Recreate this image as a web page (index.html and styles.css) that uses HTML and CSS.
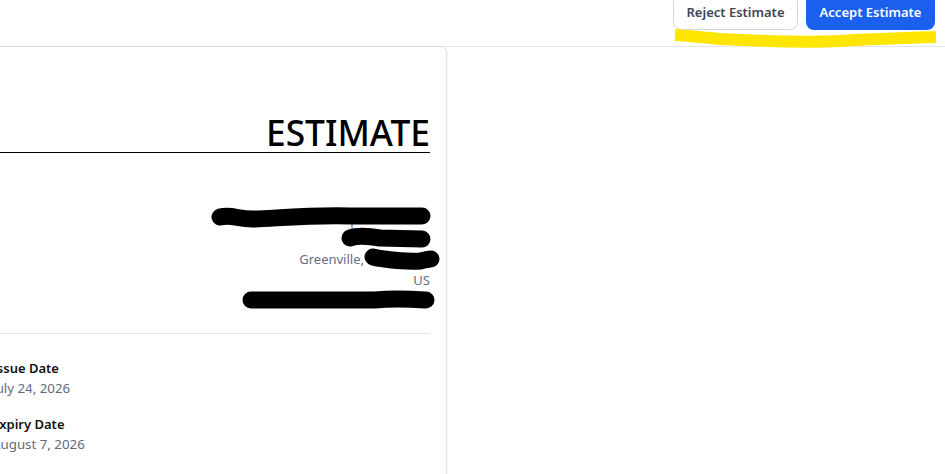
FILE: index.html
```html
<!DOCTYPE html>
<html lang="en">
<head>
    <meta charset="UTF-8">
    <meta name="viewport" content="width=device-width, initial-scale=1.0">
    <title>Estimate</title>
    <link rel="stylesheet" href="styles.css">
</head>
<body>
    <header class="topbar">
        <button type="button" class="btn btn-reject">Reject Estimate</button>
        <button type="button" class="btn btn-accept">Accept Estimate</button>
    </header>

    <main class="estimate-card">
        <h1 class="estimate-title">ESTIMATE</h1>

        <div class="address">
            <div class="address-line"></div>
            <div class="address-line"></div>
            <div class="address-line">Greenville,</div>
            <div class="address-line">US</div>
            <div class="address-line"></div>
        </div>

        <dl class="dates">
            <div class="date-item">
                <dt>Issue Date</dt>
                <dd>July 24, 2026</dd>
            </div>
            <div class="date-item">
                <dt>Expiry Date</dt>
                <dd>August 7, 2026</dd>
            </div>
        </dl>
    </main>

    <!-- marker scribbles drawn over the screenshot -->
    <svg class="scribbles" width="945" height="474" viewBox="0 0 945 474" aria-hidden="true">
        <path class="marker-yellow" d="M675 35 C 690 36, 700 37, 720 39 C 760 41, 800 43, 840 41 C 870 39, 905 38, 936 37"/>
        <path class="redact-tick" d="M352 222 V228"/>
        <path class="redact" d="M220 217 C 232 214, 240 220, 255 219 C 280 218, 310 215, 350 216 L 422 216"/>
        <path class="redact" d="M350 238 C 358 235, 368 236, 380 238 L 422 239"/>
        <path class="redact" d="M373 257 C 385 260, 410 262, 420 261 C 426 260, 428 259, 431 259"/>
        <path class="redact" d="M251 300 L 375 300 C 395 298, 410 299, 426 300"/>
    </svg>
</body>
</html>
```

FILE: styles.css
```css
* {
    margin: 0;
    padding: 0;
    box-sizing: border-box;
    font-family: "Noto Sans", "Open Sans", sans-serif;
}

body {
    position: relative;
    height: 100vh;
    overflow: hidden;
    background-color: #fff;
}

/* Top action bar */
.topbar {
    display: flex;
    justify-content: flex-end;
    align-items: flex-end;
    gap: 8px;
    height: 47px;
    padding: 0 10px 16px 0;
    border-bottom: 1px solid #e6e6ea;
}

.btn {
    height: 36px;
    border-radius: 8px;
    font-size: 13px;
    font-weight: 600;
    cursor: pointer;
}

.btn-reject {
    width: 125px;
    background-color: #fff;
    border: 1px solid #d5d7de;
    color: #3f4654;
}

.btn-accept {
    width: 129px;
    background-color: #1a5fee;
    border: none;
    color: #fff;
}

/* Estimate sheet, runs off the left and bottom of the window */
.estimate-card {
    width: 470px;
    height: 600px;
    margin-left: -24px;
    padding: 64px 16px 0;
    background-color: #fff;
    border-radius: 0 6px 0 0;
    box-shadow: 1px 0 2px rgba(0, 0, 0, 0.14);
}

.estimate-title {
    height: 42px;
    border-bottom: 1px solid #000;
    color: #000;
    font-size: 35.3px;
    font-weight: 500;
    line-height: 43px;
    text-align: right;
}

.address {
    margin-top: 55px;
    padding-bottom: 22px;
    border-bottom: 1px solid #e5e7eb;
    text-align: right;
}

.address-line {
    height: 20.6px;
    color: #64708a;
    font-size: 13px;
    line-height: 20.6px;
}

.address-line:nth-child(3) {
    padding-right: 66px;
}

.dates {
    padding-top: 24px;
}

.date-item {
    margin-bottom: 16px;
}

.date-item dt {
    color: #111;
    font-size: 13px;
    font-weight: 600;
    line-height: 20px;
}

.date-item dd {
    color: #5f6b7e;
    font-size: 13.3px;
    line-height: 20px;
}

/* Overlay for the hand-drawn marks */
.scribbles {
    position: absolute;
    top: 0;
    left: 0;
    pointer-events: none;
}

.scribbles path {
    fill: none;
    stroke-linecap: round;
    stroke-linejoin: round;
}

.scribbles .marker-yellow {
    stroke: #ffe600;
    stroke-width: 12;
    stroke-linecap: butt;
}

.redact {
    stroke: #000;
    stroke-width: 17;
}

.redact-tick {
    stroke: #0d6fa8;
    stroke-width: 1;
}
```
